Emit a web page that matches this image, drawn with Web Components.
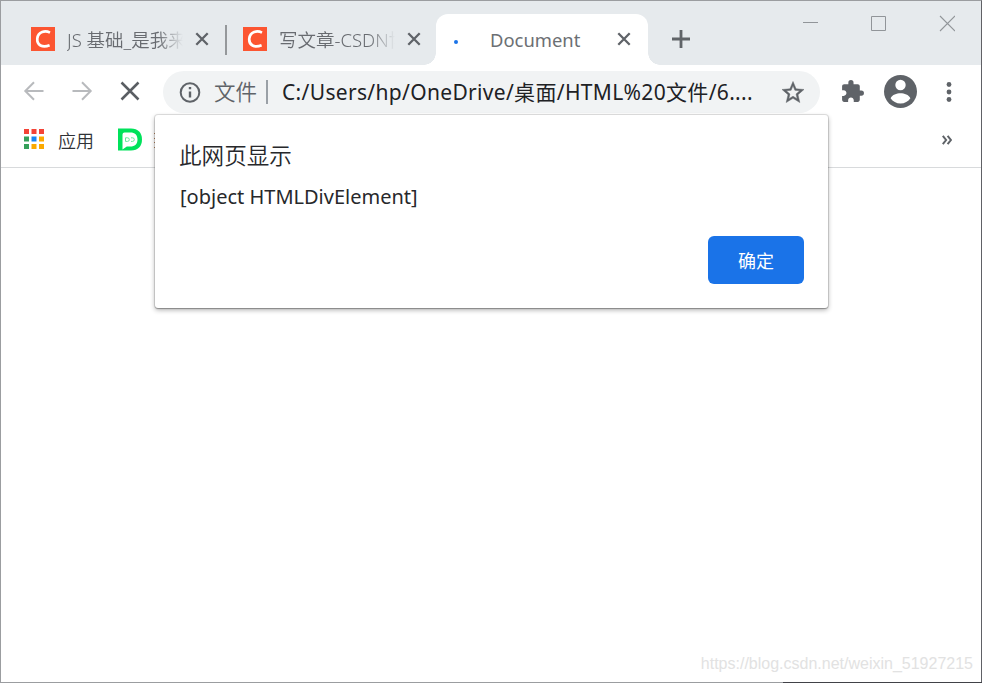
<!DOCTYPE html>
<html lang="zh-CN">
<head>
<meta charset="utf-8">
<title>Document</title>
<style>
html,body{margin:0;height:100%;overflow:hidden;background:#fff}
body{font-family:"Noto Sans","Noto Sans CJK SC",sans-serif}
</style>
</head>
<body>
<browser-window></browser-window>
<script>
const define = (name, css, html) => customElements.define(name, class extends HTMLElement {
  constructor() {
    super();
    this.attachShadow({mode: 'open'}).innerHTML = `<style>*{box-sizing:border-box}svg{display:block}${css}</style>${html}`;
  }
});

define('close-icon', ':host{display:block;width:14px;height:14px;flex:none;color:#5f6368}',
  '<svg width="14" height="14" viewBox="0 0 14 14"><path d="M1.3 1.3 12.7 12.7M12.7 1.3 1.3 12.7" stroke="currentColor" stroke-width="2.3"/></svg>');

define('csdn-icon', ':host{display:block;width:24px;height:24px;flex:none}',
  '<svg width="24" height="24" viewBox="0 0 24 24"><path fill="#fc5531" d="M0 0h24v24H0z"/><path d="M19 5.600C14 3.200 7.200 4.700 6.300 11.400 5.600 18.400 11.500 21 18.600 18.300" fill="none" stroke="#fff" stroke-width="2.700"/></svg>');

define('browser-tab', `
:host{display:flex;align-items:center;height:51px;width:212px;flex:none;padding-left:18px;color:#686b70;font-size:18.500px;font-weight:350}
.title{width:116px;margin-left:12px;overflow:hidden;white-space:nowrap;line-height:30px;
 -webkit-mask-image:linear-gradient(90deg,#000 78%,transparent 100%);mask-image:linear-gradient(90deg,#000 78%,transparent 100%)}
close-icon{margin:-2px 0 0 12px}
slot[name=icon]::slotted(*){margin-top:-2px}
:host([active]){background:#fff;border-radius:12px 12px 0 0;position:relative;color:#6c6f73;font-size:18.400px;font-weight:400}
:host([active]) .title{-webkit-mask-image:none;mask-image:none}
:host([active]) close-icon{margin-left:11px}
:host([active])::before,:host([active])::after{content:"";position:absolute;bottom:0;width:12px;height:12px}
:host([active])::before{left:-12px;background:radial-gradient(circle at 0 0,transparent 11.5px,#fff 12px)}
:host([active])::after{right:-12px;background:radial-gradient(circle at 100% 0,transparent 11.5px,#fff 12px)}
`, '<slot name="icon"></slot><div class="title"><slot></slot></div><close-icon></close-icon>');

define('loading-dot', ':host{display:flex;width:24px;height:24px;align-items:center;flex:none}i{width:4px;height:4px;border-radius:50%;background:#1a73e8;margin:7px 0 0 0}', '<i></i>');

define('window-controls', ':host{display:block;width:153px;height:17px;flex:none}',
  `<svg width="153" height="17" viewBox="802 15 153 17" fill="none" stroke="#919599"><path d="M803 22.500h15M871.500 16.500h14v14h-14z"/><path d="m940 16 15 15m0-15-15 15" stroke-width="1.100"/></svg>`);

define('tab-strip', `
:host{display:flex;height:64px;background:#e6eaed;padding:0 26px 0 12px}
.tabs{display:flex;align-items:center;padding-top:13px}
.sep{width:2px;height:30px;background:#95989b;margin:0 -2px 0 0}
.plus{margin:-2px 0 0 23px}
window-controls{margin:14px 0 0 auto}
`, `<div class="tabs">
<browser-tab><csdn-icon slot="icon"></csdn-icon>JS 基础_是我来</browser-tab><div class="sep"></div>
<browser-tab><csdn-icon slot="icon"></csdn-icon>写文章-CSDN博客</browser-tab>
<browser-tab active style="margin-left:-1px"><loading-dot slot="icon"></loading-dot>Document</browser-tab>
<svg class="plus" width="20" height="20" viewBox="0 0 20 20"><path d="M10 1v18M1 10h18" stroke="#606468" stroke-width="2.800"/></svg></div>
<window-controls></window-controls>`);

define('address-bar', `
:host{display:flex;align-items:center;width:657px;height:42px;border-radius:21px;background:#f1f3f4;padding:0 16px;color:#202124;font-size:21px;white-space:nowrap}
svg{flex:none}
.kind,.url{position:relative;top:-1px}
.kind{color:#5f6368;font-size:21.500px;font-weight:350;margin-left:13px;width:43px}
.sep{width:2px;height:24px;background:#9aa0a6;margin:0 14px 0 9px}
.url{flex:1;letter-spacing:.33px}
`, `<svg width="22" height="22" viewBox="0 0 22 22" fill="none" stroke="#5f6368" stroke-width="2"><circle cx="11" cy="11.500" r="9.300"/><path d="M11 10.500v6M11 6v2.300" stroke-width="2.400"/></svg>
<div class="kind">文件</div><div class="sep"></div><div class="url">C:/Users/hp/OneDrive/桌面/HTML%20文件/6....</div>
<svg width="22" height="22" viewBox="0 0 24 24" fill="#5f6368" stroke="#5f6368" stroke-width=".5"><path d="m24 9.240-8.630-.740L12 .5 8.630 8.510 0 9.240l6.550 5.680L4.580 23.500 12 18.900l7.420 4.600-1.960-8.580zM12 16.600l-4.510 2.790 1.200-5.240-3.980-3.520 5.250-.460L12 5.200l2.050 4.980 5.250.460-3.980 3.520 1.200 5.240z"/></svg>`);

define('tool-bar', `
:host{display:flex;align-items:center;height:48px;padding:5px 28px 0 22px}
svg{flex:none}
.nav{display:flex;gap:28px;width:140px;align-items:center;margin-top:-2px}
.nav svg:last-child{margin-left:-1px}
.actions{display:flex;align-items:center;margin-left:20px}
`, `<div class="nav">
<svg width="21" height="20" viewBox="0 0 21 20" fill="none" stroke="#b8babd" stroke-width="2"><path d="M20.500 10H2.500M11 1.300 2.300 10l8.700 8.700"/></svg>
<svg width="21" height="20" viewBox="0 0 21 20" fill="none" stroke="#b8babd" stroke-width="2"><path d="M.5 10h18M10 1.300l8.700 8.700-8.700 8.700"/></svg>
<svg width="20" height="20" viewBox="0 0 20 20" fill="none" stroke="#5a5e63" stroke-width="2.500"><path d="m1.500 1.500 17 17m0-17-17 17"/></svg></div>
<address-bar></address-bar>
<div class="actions">
<svg width="25" height="25" viewBox="0 0 24 24" fill="#5f6368"><path d="M20.500 11H19V7c0-1.100-.9-2-2-2h-4V3.500a2.500 2.500 0 0 0-5 0V5H4c-1.100 0-1.990.9-1.990 2v3.800H3.500c1.490 0 2.700 1.210 2.700 2.700s-1.210 2.700-2.700 2.700H2V20c0 1.100.9 2 2 2h3.800v-1.500c0-1.490 1.210-2.700 2.700-2.700s2.700 1.210 2.700 2.700V22H17c1.100 0 2-.9 2-2v-4h1.500a2.500 2.500 0 0 0 0-5z"/></svg>
<svg style="margin-left:19px" width="33" height="33" viewBox="0 0 33 33"><circle cx="16.500" cy="16.500" r="16.500" fill="#5f6368"/><circle cx="16.500" cy="10" r="5.200" fill="#fff"/><path d="M6.600 23.200c1.700-3.500 6-4.900 9.900-4.900s8.200 1.400 9.900 4.900c-2.100 3.200-5.800 5.300-9.900 5.300s-7.800-2.100-9.900-5.300z" fill="#fff"/></svg>
<svg style="margin-left:29px" width="6" height="20" viewBox="0 0 6 20" fill="#5f6368"><circle cx="3" cy="2.500" r="2.400"/><circle cx="3" cy="10" r="2.400"/><circle cx="3" cy="17.500" r="2.400"/></svg>
</div>`);

define('bookmarks-bar', `
:host{display:flex;align-items:center;height:55px;border-bottom:1px solid #d8dadc;padding:0 29px 1px 23px;font-size:18px;font-weight:350;color:#303236;line-height:24px}
svg{flex:none}
span{position:relative;top:1px;white-space:nowrap}
.more{margin-left:auto}
`, `<svg style="margin-top:-1px" width="20" height="20" viewBox="0 0 20 20"><path fill="#f44336" d="M0 0h5v5H0zM7.500 0h5v5h-5zM15 0h5v5h-5z"/><path fill="#34a05a" d="M0 7.500h5v5H0zM0 15h5v5H0z"/><path fill="#1a85f2" d="M7.500 7.500h5v5h-5z"/><path fill="#fba900" d="M15 7.500h5v5h-5zM7.500 15h5v5h-5zM15 15h5v5h-5z"/></svg>
<span style="margin-left:14px">应用</span>
<svg style="margin-left:24px" width="25" height="23" viewBox="0 0 25 23"><path fill="#00e25b" d="M0 .5h13c7 0 11 4.300 11 11s-4 11-11 11H0z"/><path fill="#fff" d="M4.500 6.500q0-2 2-2h5.800c4.600 0 7.200 2.600 7.200 7s-2.600 7-7.200 7H8.800l-4.300 3z"/><path d="M7.500 9.800h2q1.800 0 1.800 1.800t-1.800 1.800h-2zM13 9.800h1.500q1.800 0 1.800 1.800t-1.800 1.800H13" fill="none" stroke="#64eb9a"/></svg>
<svg style="margin-left:11px" width="2" height="16" viewBox="0 0 2 16" fill="#b98763"><path d="M0 1h2v1H0zM0 6h2v1H0zM0 10h2v1H0zM0 15h2v1H0z"/></svg>
<svg class="more" width="10" height="10" viewBox="0 0 10 10" fill="none" stroke="#5f6368" stroke-width="2"><path d="m.8.8 3.300 4.200L.8 9.200M5.600.8 8.900 5 5.600 9.200"/></svg>`);

define('alert-dialog', `
:host{display:flex;flex-direction:column;position:absolute;left:155px;top:115px;width:673px;height:193px;background:#fff;border-radius:3px;padding:23px 24px;
 box-shadow:0 0 0 1px rgba(0,0,0,.1),0 1px 1px rgba(0,0,0,.22),0 2px 5px rgba(0,0,0,.32);color:#27282b}
h1{margin:0;font-size:22.600px;font-weight:350;line-height:36px}
p{margin:7px 0 0 1px;font-size:20px;line-height:32px;white-space:nowrap}
button{all:unset;box-sizing:border-box;position:relative;align-self:flex-end;width:96px;height:48px;margin-top:23px;border-radius:6px;background:#1a73e8;color:#fff;text-align:center;font-size:18px;font-weight:400;line-height:50px}
`, '<h1><slot name="title"></slot></h1><p><slot></slot></p><button>确定</button>');

define('browser-window', `
:host{display:flex;flex-direction:column;position:relative;width:982px;height:683px;box-sizing:border-box;background:#fff;border:1px solid #9b9da0;border-right-color:#606166}
main{flex:1;display:flex;align-items:flex-end;justify-content:flex-end;padding:0 8px 8px}
.mark{font:16px/20px "Liberation Sans",sans-serif;color:#e2e2e2}
:host::after{content:"";position:absolute;left:782px;right:-1px;bottom:-1px;height:1px;background:#414248}
alert-dialog{margin:-1px 0 0 -1px}
`, `<tab-strip></tab-strip><tool-bar></tool-bar><bookmarks-bar></bookmarks-bar>
<main><div class="mark">https://blog.csdn.net/weixin_51927215</div></main>
<alert-dialog><span slot="title">此网页显示</span>[object HTMLDivElement]</alert-dialog>`);
</script>
</body>
</html>
